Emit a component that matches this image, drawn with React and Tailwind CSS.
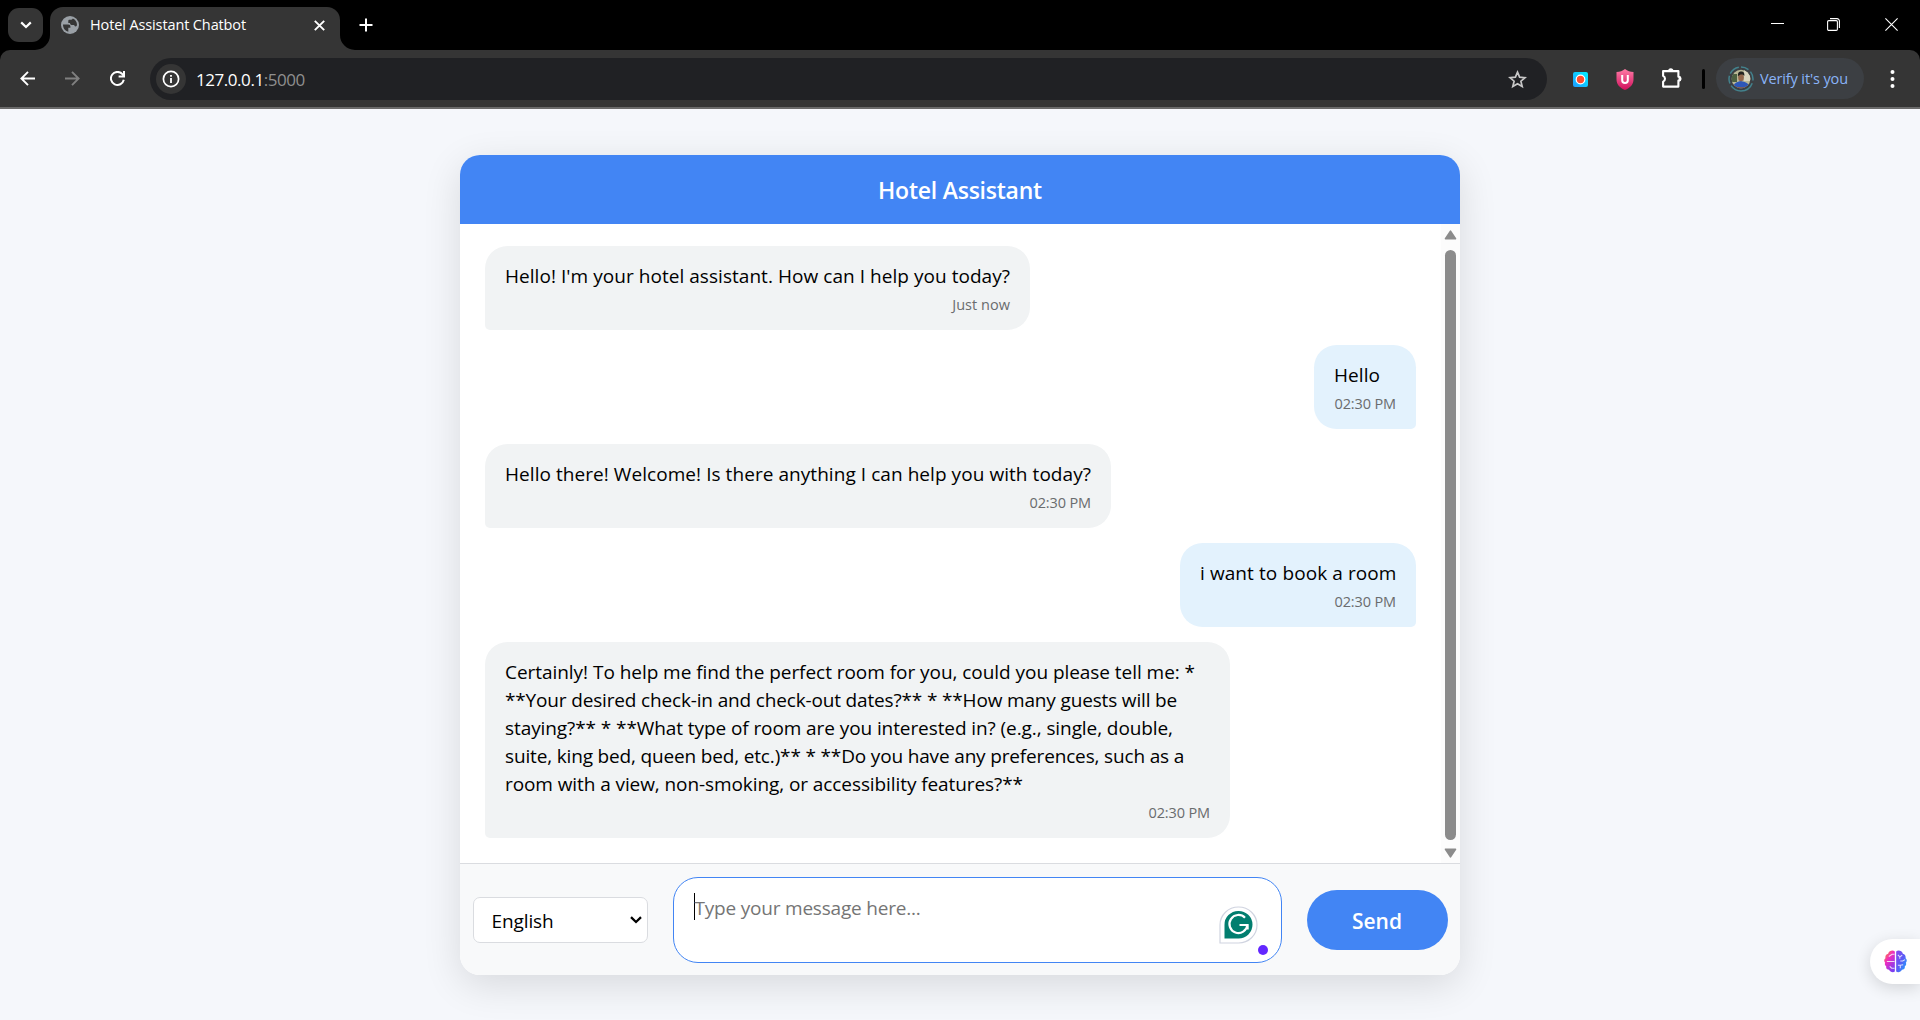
const messages = [
  { from: "bot", time: "Just now", timeTrack: "tracking-[0.03px]", lines: [["Hello! I'm your hotel assistant. How can I help you today?", "tracking-[0.047px]"]], width: "w-[545px]" },
  { from: "user", time: "02:30 PM", lines: [["Hello", "tracking-[0.06px]"]], width: "w-[102px]" },
  { from: "bot", time: "02:30 PM", lines: [["Hello there! Welcome! Is there anything I can help you with today?", "tracking-[0.058px]"]], width: "w-[626px]" },
  { from: "user", time: "02:30 PM", lines: [["i want to book a room", "tracking-[0.09px]"]], width: "w-[236px]" },
  {
    from: "bot",
    time: "02:30 PM",
    width: "w-[745px]",
    lines: [
      ["Certainly! To help me find the perfect room for you, could you please tell me: *", "tracking-[-0.045px]"],
      ["**Your desired check-in and check-out dates?** * **How many guests will be", "tracking-[-0.16px]"],
      ["staying?** * **What type of room are you interested in? (e.g., single, double,", "tracking-[-0.086px]"],
      ["suite, king bed, queen bed, etc.)** * **Do you have any preferences, such as a", "tracking-[-0.16px]"],
      ["room with a view, non-smoking, or accessibility features?**", "tracking-[-0.085px]"],
    ],
  },
];

function Message({ from, lines, time, timeTrack = "tracking-[-0.125px]", width }) {
  const tone =
    from === "bot"
      ? "self-start bg-[#f1f3f4] rounded-bl-[5px]"
      : "self-end bg-[#e3f2fd] rounded-br-[5px]";
  return (
    <div className={`rounded-[22.5px] px-5 pb-[15px] pt-4 ${width} ${tone}`}>
      {lines.map(([text, track]) => (
        <p key={text} className={`whitespace-nowrap text-[19px] leading-7 text-black ${track}`}>
          {text}
        </p>
      ))}
      <p className={`mt-1 whitespace-nowrap text-right text-[14.5px] leading-[21px] text-[#6a6c6e] ${timeTrack}`}>{time}</p>
    </div>
  );
}

function TabStrip() {
  return (
    <div className="flex h-[50px] bg-black">
      <div className="flex w-[50px] items-start pl-2 pt-2">
        <button className="flex h-[34px] w-[35px] items-center justify-center rounded-[11px] bg-[#353535]">
          <svg width="12" height="8" viewBox="0 0 12 8" fill="none" stroke="#fff" strokeWidth="2.2">
            <path d="M1.2 1.4 6 6l4.8-4.6" />
          </svg>
        </button>
      </div>
      <div className="relative mt-[7px] flex h-[43px] w-[290px] items-center rounded-t-[13px] bg-[#353535] pb-[7px] pl-[11px]">
        <svg className="absolute -left-[15px] bottom-0" width="15" height="15" viewBox="0 0 15 15">
          <path d="M15 0v15H0A15 15 0 0 0 15 0Z" fill="#353535" />
        </svg>
        <svg className="absolute -right-[15px] bottom-0" width="15" height="15" viewBox="0 0 15 15">
          <path d="M0 0v15h15A15 15 0 0 1 0 0Z" fill="#353535" />
        </svg>
        <svg width="18" height="18" viewBox="0 0 18 18">
          <circle cx="9" cy="9" r="9" fill="#9aa0a6" />
          <path d="M2 8.5h5.2c1.6 0 2.2.8 2.2 2.1v1.2H7.3v3.9C4 15 2 12 2 8.5Z" fill="#353535" />
          <path d="M11.8 2.6C14.4 3.7 16 6 16 8.8c-.1 1-.6 1.7-1.4 1.7-.9 0-1.3-.5-1.3-1.4-.9 0-2.1 0-2.8-.2-1-.4-1.5-1-1.5-2H7.3V5.1c0-.8.4-1.3 1.3-1.3h1.7c.9 0 1.2-.5 1.5-1.2Z" fill="#353535" />
        </svg>
        <span className="ml-[11px] whitespace-nowrap text-[14.5px] leading-5 tracking-[-0.12px] text-white">Hotel Assistant Chatbot</span>
        <svg className="ml-auto mr-[15px]" width="11" height="11" viewBox="0 0 11 11" stroke="#fff" strokeWidth="1.9">
          <path d="m.8.8 9.4 9.4M10.2.8.8 10.2" />
        </svg>
      </div>
      <svg className="ml-[19px] mt-[18px]" width="14" height="14" viewBox="0 0 14 14" stroke="#fff" strokeWidth="2">
        <path d="M7 .5v13M.5 7h13" />
      </svg>
      <div className="ml-auto flex items-start pr-[22px] pt-[18px]">
        <svg width="13" height="13" viewBox="0 0 13 13" stroke="#fff" strokeWidth="1">
          <path d="M0 5.5h13" />
        </svg>
        <svg className="ml-[43px]" width="13" height="13" viewBox="0 0 13 13" fill="none" stroke="#fff">
          <rect x=".6" y="2.6" width="9.8" height="9.8" rx="1.2" strokeWidth="1.1" />
          <path d="M3 .6h7A2.4 2.4 0 0 1 12.4 3v7" strokeWidth="1.1" />
        </svg>
        <svg className="ml-[45px]" width="13" height="13" viewBox="0 0 13 13" stroke="#fff" strokeWidth="1.1">
          <path d="m.4.4 12.2 12.2M12.6.4.4 12.6" />
        </svg>
      </div>
    </div>
  );
}

function Toolbar() {
  return (
    <div className="bg-black">
      <div className="flex h-[59px] rounded-t-[10px] border-b-2 border-[#6a6a6a] bg-[#353535] pt-2">
        <div className="flex h-[42px] w-[150px] items-center pl-5">
          <svg className="mt-[-1px]" width="15" height="15" viewBox="0 0 15 15" fill="none" stroke="#fff" strokeWidth="1.9">
            <path d="M15 7.5H1.6M8 .9 1.4 7.5 8 14.1" />
          </svg>
          <svg className="ml-[30px] mt-[-1px]" width="15" height="15" viewBox="0 0 15 15" fill="none" stroke="#808080" strokeWidth="1.9">
            <path d="M0 7.5h13.4M7 .9l6.6 6.6L7 14.1" />
          </svg>
          <svg className="ml-[30px] mt-[-1px]" width="15" height="15" viewBox="0 0 15 15" fill="none" stroke="#fff" strokeWidth="2">
            <path d="M13.8 8.8A6.5 6.5 0 1 1 12.4 3.2L13.6 5" />
            <path d="M14 0v5.6H8.6" />
          </svg>
        </div>
        <div className="flex h-[42px] w-[1397px] items-center rounded-full bg-[#202124] pl-[6px] pr-5">
          <div className="flex size-[30px] items-center justify-center rounded-full bg-[#353535]">
            <svg width="18" height="18" viewBox="0 0 18 18" fill="none">
              <circle cx="9" cy="9" r="7.6" stroke="#fff" strokeWidth="1.7" />
              <path d="M9 8v5M9 4.9v1.8" stroke="#fff" strokeWidth="1.8" />
            </svg>
          </div>
          <span className="ml-[10px] mt-px whitespace-nowrap text-[17px] leading-6 tracking-[-0.45px] text-white">
            127.0.0.1<span className="text-[#8f8f8f]">:5000</span>
          </span>
          <svg className="ml-auto" width="19" height="19" viewBox="0 0 19 19" fill="none" stroke="#c7c7c7" strokeWidth="1.7">
            <path d="m9.5 2.2 2.1 5 5.4.5-4.1 3.5 1.3 5.3-4.7-2.8-4.7 2.8 1.3-5.3L2 7.7l5.4-.5Z" />
          </svg>
        </div>
        <div className="flex h-[42px] flex-1 items-center">
          <svg className="ml-[26px]" width="15" height="15" viewBox="0 0 15 15">
            <defs>
              <linearGradient id="rec" x1="0" y1="1" x2="1" y2="0">
                <stop stopColor="#1e9bff" />
                <stop offset="1" stopColor="#00f0ff" />
              </linearGradient>
            </defs>
            <rect width="15" height="15" rx="2" fill="url(#rec)" />
            <circle cx="7.5" cy="7.5" r="4.9" fill="#fff" />
            <circle cx="7.5" cy="7.5" r="3.7" fill="#ff4b2b" />
          </svg>
          <svg className="ml-[28px]" width="18" height="21" viewBox="0 0 18 21">
            <defs>
              <linearGradient id="shield" x1="0" y1="0" x2="0" y2="1">
                <stop stopColor="#ff7ba6" />
                <stop offset="1" stopColor="#d0105c" />
              </linearGradient>
            </defs>
            <path d="M9 0c2.5 2 5 3 8.5 3v7.5c0 5-3.5 8.5-8.5 10.5C4 19 .5 15.5.5 10.5V3C4 3 6.5 2 9 0Z" fill="url(#shield)" />
            <path d="M6.2 6v5.200a2.800 2.800 0 0 0 5.600 0V6" fill="none" stroke="#fff" strokeWidth="2" />
          </svg>
          <svg className="ml-[27px] mt-[-2px]" width="22" height="22" viewBox="0 0 22 22">
            <path d="M2.100 4.100h15.300v5.700a1.900 1.900 0 0 1 0 3.800v6H2.100v-5a3.100 3.100 0 0 0 0-5.700Z" fill="none" stroke="#fff" strokeWidth="2.100" strokeLinejoin="round" />
            <path d="M7.200 3.800a2.600 2.600 0 0 1 5.200 0ZM17.600 9a2.700 2.700 0 0 1 0 5.400Z" fill="#fff" />
          </svg>
          <div className="ml-[19px] h-5 w-[3px] rounded-full bg-black" />
          <div className="-mt-px ml-[11px] flex h-[41px] w-[148px] items-center rounded-full bg-[#3c3f43] pl-3">
            <svg width="26" height="26" viewBox="0 0 26 26">
              <defs>
                <clipPath id="face"><circle cx="13" cy="13" r="9.300" /></clipPath>
              </defs>
              <circle cx="13" cy="13" r="12" fill="none" stroke="#43828d" strokeWidth="1.500" strokeDasharray="8 2.800 9.500 2.800 26 2.400 8 2.200 11 2.700" transform="rotate(-90 13 13)" />
              <g clipPath="url(#face)">
                <rect width="26" height="26" fill="#b9b795" />
                <path d="M3 8h6v8H3z" fill="#4d6040" />
                <path d="M16 3h7v12h-7z" fill="#d9d5bf" />
                <path d="M5.500 26v-5c.5-4.500 3.500-5 7.500-6 4.500 1 7 2 8 5v6Z" fill="#2e57b8" />
                <path d="M6 20c5 1.800 10 1.800 14 0v1.800c-4 2-9 2-14 0Z" fill="#8b6046" />
                <ellipse cx="13" cy="11.500" rx="2.800" ry="3.800" fill="#93664b" />
                <path d="M10 10.500c-.4-4 1-5 3.200-5s3.600 1.200 3.100 4.500c-1.700-2-4.200-2-6.300.5Z" fill="#23231f" />
              </g>
            </svg>
            <span className="ml-[6px] whitespace-nowrap text-[14.5px] leading-5 tracking-[-0.13px] text-[#8ab4f8]">Verify it's you</span>
          </div>
          <svg className="ml-[26px] mt-[-1px]" width="5" height="18" viewBox="0 0 5 18" fill="#fff">
            <circle cx="2.500" cy="2" r="2" />
            <circle cx="2.500" cy="9" r="2" />
            <circle cx="2.500" cy="16" r="2" />
          </svg>
        </div>
      </div>
    </div>
  );
}

function Scrollbar() {
  return (
    <div className="flex w-[19px] flex-col items-center bg-[#fcfcfc] pr-px pt-[6px]">
      <svg width="13" height="10" viewBox="0 0 13 10">
        <path d="M6.500 1.200 11.500 8.800h-10Z" fill="#8b8b8b" stroke="#8b8b8b" strokeWidth="1.600" strokeLinejoin="round" />
      </svg>
      <div className="mt-[10px] h-[590px] w-[11px] rounded-full bg-[#8b8b8b]" />
      <svg className="mt-2" width="13" height="10" viewBox="0 0 13 10">
        <path d="M6.500 8.800 1.500 1.200h10Z" fill="#8b8b8b" stroke="#8b8b8b" strokeWidth="1.600" strokeLinejoin="round" />
      </svg>
    </div>
  );
}

function Composer() {
  return (
    <div className="flex h-[112px] items-center gap-[25px] border-t border-[#dadce0] bg-[#f8f9fa] px-[12.5px] pt-px">
      <div className="flex h-[46px] w-[175px] items-center justify-between rounded-[7px] border border-[#dadce0] bg-white pl-[18px] pr-[5px]">
        <span className="pt-0.5 text-[19px] leading-7 tracking-[-0.1px] text-black">English</span>
        <svg width="12" height="8" viewBox="0 0 12 8" fill="none" stroke="#000" strokeWidth="2.300">
          <path d="M1 1.200 6 6l5-4.800" />
        </svg>
      </div>
      <div className="relative h-[86px] w-[609px] rounded-[25px] border border-[#4285f4] bg-white pl-5 pt-[15px]">
        <div className="flex h-[27px] items-center border-l border-black">
          <span className="mt-[3px] whitespace-nowrap text-[19px] leading-[27px] tracking-[-0.2px] text-[#757575]">Type your message here...</span>
        </div>
        <svg className="absolute right-[23px] top-[28px]" width="39" height="38" viewBox="0 0 39 38">
          <path d="M1 37V19A18.500 18 0 1 1 19.500 37Z" fill="#fff" stroke="#d0d4e0" strokeWidth="1.200" />
          <path d="M5.500 32.500V19A14 13.800 0 1 1 19.500 32.500Z" fill="#027e6f" />
          <path d="M26 11.800A9 9 0 1 0 28.400 19H20.500M28.600 18.500v5" fill="none" stroke="#fff" strokeWidth="2.200" />
        </svg>
        <div className="absolute bottom-[7px] right-[13px] size-[10px] rounded-full bg-[#6327ff]" />
      </div>
      <button className="h-[60px] w-[141px] rounded-[30px] bg-[#4285f4] pt-px text-[21px] font-semibold leading-7 text-white">Send</button>
    </div>
  );
}

function BrainButton() {
  return (
    <div className="absolute right-0 top-[939px] flex h-[45px] w-[50px] items-center rounded-l-full bg-white pl-[14px] shadow-[0_4px_16px_rgba(0,0,0,0.14)]">
      <svg width="23" height="23" viewBox="0 0 24 24">
        <defs>
          <linearGradient id="brainL" x1="0" y1="0" x2=".7" y2="1">
            <stop stopColor="#ff9d1c" />
            <stop offset=".45" stopColor="#f02bc0" />
            <stop offset="1" stopColor="#7b3ff2" />
          </linearGradient>
          <linearGradient id="brainR" x1="0" y1="0" x2="1" y2="1">
            <stop stopColor="#8a45ee" />
            <stop offset=".5" stopColor="#5b5cf5" />
            <stop offset="1" stopColor="#11b4ff" />
          </linearGradient>
        </defs>
        <path d="M11.300 1.500v21c-1.600 1.200-5 .8-6-1.800-2.200 0-3.400-1.500-3-3.700C.8 16 .5 14.800 1.200 13.300-.2 12 0 9.600 1.500 8.700 1.100 6.500 2 4.500 4.300 4 5.200.8 9-.3 11.300 1.500Z" fill="url(#brainL)" />
        <path d="M12.700 1.500v21c1.600 1.200 5 .8 6-1.800 2.200 0 3.400-1.500 3-3.700 1.500-1 1.800-2.200 1.100-3.700 1.400-1.300 1.200-3.700-.3-4.600.4-2.200-.5-4.200-2.800-4.700-.9-3.200-4.700-4.300-7-2.500Z" fill="url(#brainR)" />
        <path d="M11 4.500H8.500L5 6.800M3 12h8M6 17l2 2h3M14.500 5l2 2.200V9m0-1.800L19 5.500M17 11.500h2.500L22 10M14.500 16h2.500v3m0-3 3-.5" fill="none" stroke="#fff" strokeOpacity=".8" strokeWidth="1.100" />
      </svg>
    </div>
  );
}

export default function App() {
  return (
    <div className="relative flex h-[1020px] w-[1920px] flex-col overflow-hidden bg-[#f5f7fb] font-['Open_Sans','Noto_Sans',sans-serif]">
      <TabStrip />
      <Toolbar />
      <main className="flex flex-1 justify-center pt-[46px]">
        <section className="flex h-[820px] w-[1000px] flex-col overflow-hidden rounded-[20px] bg-white shadow-[0_10px_38px_rgba(0,0,0,0.12)]">
          <h1 className="flex h-[69px] items-center justify-center text-[23px] font-semibold leading-8 tracking-[-0.23px] text-white bg-[#4285f4]">
            Hotel Assistant
          </h1>
          <div className="flex h-[639px]">
            <div className="flex flex-1 flex-col gap-[15px] pl-[25px] pr-[25px] pt-[22px]">
              {messages.map((message, index) => (
                <Message key={index} {...message} />
              ))}
            </div>
            <Scrollbar />
          </div>
          <Composer />
        </section>
      </main>
      <BrainButton />
    </div>
  );
}
